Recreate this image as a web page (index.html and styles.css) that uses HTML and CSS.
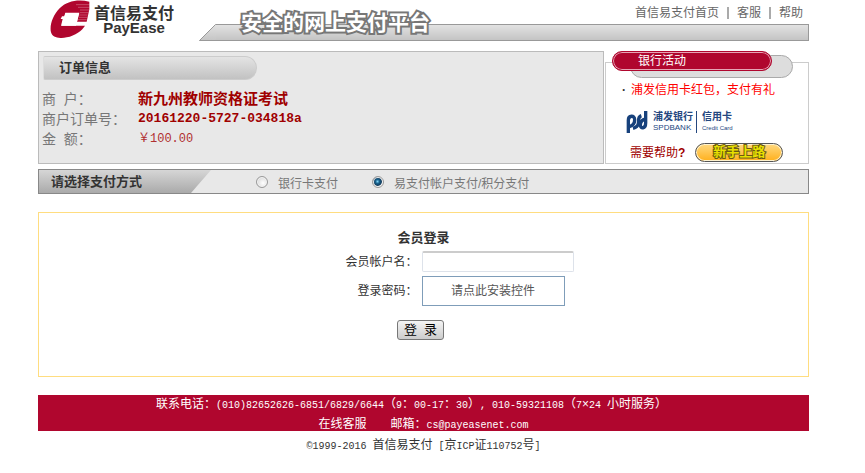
FILE: index.html
```html
<!DOCTYPE html>
<html lang="zh-CN">
<head>
<meta charset="utf-8">
<title>首信易支付 PayEase</title>
<link rel="stylesheet" href="styles.css">
</head>
<body>
<div class="page">
  <header class="header">
    <div class="logo">
      <svg class="logo-mark" viewBox="0 0 120 114" width="40" height="38" aria-hidden="true">
        <path fill="#b0062e" d="M118 5C84 -3 51 3 29 25C8 46 -2 77 3 97C7 113 28 117 50 112C76 107 96 92 105 77H35L46 40H87L81 65H110L118 28Z"/>
        <path fill="#fff" d="M46 38H88L78 77H33L38 57H32L36 49H43Z"/>
        <path stroke="#fff" stroke-width="1.500" opacity=".55" d="M78 14H119M84 22H118M90 30H117M90 38H115M88 45H113M86 52H112M84 59H110"/>
      </svg>
      <div class="logo-text"><span class="logo-cn">首信易支付</span><span class="logo-en">PayEase</span></div>
    </div>
    <div class="banner">
      <nav class="links"><a href="#">首信易支付首页</a><i></i><a href="#">客服</a><i></i><a href="#">帮助</a></nav>
      <div class="bar">
        <svg class="slope" viewBox="0 0 17 17" width="17" height="17" aria-hidden="true">
          <defs><linearGradient id="g" x2="0" y2="1"><stop stop-color="#e2e2e2"/><stop offset="1" stop-color="#c4c4c4"/></linearGradient></defs>
          <path fill="url(#g)" d="M0 17L17 0V17Z"/><path fill="none" stroke="#999" d="M17 .5H16.500L.5 16.500H17"/>
        </svg>
        <div class="bar-body"></div>
        <h1 class="slogan">安全的网上支付平台</h1>
      </div>
    </div>
  </header>

  <div class="top">
    <section class="order">
      <h2 class="order-title">订单信息</h2>
      <dl class="order-list">
        <dt>商&nbsp; 户：</dt><dd class="shop">新九州教师资格证考试</dd>
        <dt>商户订单号：</dt><dd class="number">20161220-5727-034818a</dd>
        <dt>金&nbsp; 额：</dt><dd class="amount">￥100.00</dd>
      </dl>
    </section>
    <aside class="promo">
      <div class="promo-head"><h2 class="promo-title">银行活动</h2></div>
      <div class="promo-body">
        <a class="news" href="#"><b>·</b>浦发信用卡红包，支付有礼</a>
        <div class="bank">
          <svg viewBox="0 0 64 66" width="22" height="22" aria-hidden="true">
            <g fill="none" stroke="#17417c" stroke-width="10"><path d="M6 66V28C6 12 25 12 25 26C25 38 19 44 9 47"/><path d="M45 14C33 18 38 28 36 38C34 48 28 50 20 52"/><path d="M58 0V36C58 54 42 54 42 42C42 32 48 26 58 24"/></g>
          </svg>
          <div class="bank-name"><span>浦发银行</span><small class="spdb">SPDBANK</small></div>
          <div class="bank-card"><span>信用卡</span><small>Credit Card</small></div>
        </div>
        <div class="help"><span>需要帮助<b>?</b></span><a class="guide" href="#">新手上路</a></div>
      </div>
    </aside>
  </div>

  <div class="methods" role="radiogroup" aria-labelledby="methods-title">
    <div class="methods-title" id="methods-title">请选择支付方式</div>
    <label class="method"><input type="radio" name="pay">银行卡支付</label>
    <label class="method"><input type="radio" name="pay" checked>易支付帐户支付/积分支付</label>
  </div>

  <form class="login">
    <h2>会员登录</h2>
    <div class="row"><label for="account">会员帐户名：</label><input id="account" type="text"></div>
    <div class="row"><span class="caption">登录密码：</span><button class="install" type="button">请点此安装控件</button></div>
    <button class="submit" type="submit">登&nbsp; 录</button>
  </form>

  <footer>
    <div class="contact">
      <p>联系电话：<span>(010)82652626-6851/6829/6644</span>（<span>9</span>：<span>00-17</span>：<span>30</span>）<span>, 010-59321108</span>（<span>7</span>×<span>24 </span>小时服务）</p>
      <p><a href="#">在线客服</a><a class="mail" href="#">邮箱：<span>cs@payeasenet.com</span></a></p>
    </div>
    <p class="copy"><span>©1999-2016 </span>首信易支付<span> [</span>京<span>ICP</span>证<span>110752</span>号<span>]</span></p>
  </footer>
</div>
</body>
</html>
```
FILE: styles.css
```css
* { box-sizing: border-box; }
body {
  margin: 0;
  background: #fff;
  color: #333;
  font: 12px/18px "Liberation Sans", "Noto Sans CJK SC", sans-serif;
}
h1, h2, p, dl, dd { margin: 0; }
h2 { font-size: 12px; }
a { color: inherit; text-decoration: none; }
button, input { font: inherit; }
.page { margin: 0 56px 0 38px; }

.header { display: flex; height: 41px; }
.logo { display: flex; width: 161px; padding-left: 12px; }
.logo-mark { flex: none; }
.logo-text { display: flex; flex-direction: column; width: 88px; text-align: center; padding-top: 4px; }
.logo-cn { font: bold 16px/16px "Noto Sans CJK SC", sans-serif; white-space: nowrap; }
.logo-en { font: bold 15px/16px "Liberation Sans", sans-serif; }
.banner { flex: 1; display: flex; flex-direction: column; justify-content: space-between; }
.links { display: flex; justify-content: flex-end; align-items: center; gap: 8px; padding: 4px 6px 0 0; color: #666; }
.links i { width: 2px; height: 12px; background: #aaa; }
.bar { position: relative; display: flex; height: 17px; }
.slope { flex: none; }
.bar-body { flex: 1; border: 1px solid #999; border-left: 0; background: linear-gradient(#e2e2e2, #c4c4c4); }
.slogan {
  position: absolute; left: 42px; bottom: 5px;
  font: bold 21px/30px "Noto Sans CJK SC", sans-serif;
  color: #fff; -webkit-text-stroke: 4px #777; paint-order: stroke fill;
}

.top { display: flex; gap: 1px; margin-top: 10px; height: 113px; }
.order { flex: 1; border: 1px solid #bbb; background: #e8e8e8; padding: 4px; }
.order-title {
  width: 214px; padding-left: 15px; line-height: 22px; font-size: 13px;
  border: 1px solid #ccc; border-left-color: #ddd; border-radius: 2px 12px 12px 2px;
  background: linear-gradient(#e4e4e4, #c2c2c2);
}
.order-list { display: grid; grid-template-columns: 96px 1fr; grid-auto-rows: 20px; padding-top: 9px; font-size: 14px; line-height: 20px; color: #777; margin-left: -1px; }
.order-list dt { white-space: nowrap; }
.order-list dd { color: #a00000; }
.shop { font-size: 15px; font-weight: bold; }
.number { font: bold 13px/20px "Liberation Mono", monospace; }
.order-list .amount { font: 12px/20px "Liberation Mono", "Noto Sans CJK SC", monospace; color: #b03030; }

.promo { position: relative; width: 204px; margin-top: 11px; border: 1px solid #ccc; }
.promo-head {
  position: absolute; top: -8px; left: 24px; width: 163px; height: 23px;
  border: 1px solid #aaa; border-radius: 12px; background: #ddd;
}
.promo-title {
  position: absolute; top: -5px; left: -19px; width: 160px; height: 20px; padding-left: 25px;
  border: 1px solid #b0062e; border-radius: 10px; background: #b0062e;
  box-shadow: inset 0 0 0 1px #e6a5b5; color: #fff; font-weight: normal; line-height: 18px;
}
.promo-body { padding: 18px 10px 0 16px; }
.news { display: block; color: #f00; white-space: nowrap; }
.news b { color: #333; display: inline-block; width: 9px; }
.bank { display: flex; padding: 12px 0 0 4px; height: 38px; color: #24477f; font-weight: bold; line-height: 12px; }
.bank-name, .bank-card { display: flex; flex-direction: column; height: 22px; }
.bank-name { padding: 0 3px 0 5px; border-right: 1px solid #24477f; font-size: 10px; }
.bank-card { padding-left: 5px; font-size: 10px; }
.bank small { font: 9px/10px "Liberation Sans", sans-serif; }
.bank .bank-card small { font-size: 6px; }
.bank-name .spdb { font-size: 8px; }
.help { display: flex; align-items: center; gap: 10px; padding-left: 8px; color: #a00000; white-space: nowrap; margin-top: 6px; }
.guide {
  width: 88px; height: 19px; text-align: center; line-height: 16px; font-size: 13px; font-weight: bold; color: #e8e000;
  border: 1px solid #555; border-radius: 10px; background: linear-gradient(#ffd980, #ffb01c);
  box-shadow: inset 0 0 0 1px #fff3cf; -webkit-text-stroke: 2px #6b5a10; paint-order: stroke fill;
}

.methods { display: flex; align-items: center; margin-top: 5px; height: 25px; border: 1px solid #888; background: #e8e8e8; color: #777; }
.methods-title {
  width: 172px; height: 23px; padding-left: 12px; line-height: 23px; font-weight: bold; font-size: 13px; color: #333;
  background: linear-gradient(#d6d6d6, #aaa); clip-path: polygon(0 0, 100% 0, 152px 100%, 0 100%);
}
.method { display: flex; align-items: center; margin-left: 45px; padding-top: 4px; }
.method + .method { margin-left: 34px; }
.method input {
  appearance: none; width: 12px; height: 12px; margin: -4px 10px 0 0; border: 1px solid #999; border-radius: 50%;
  background: radial-gradient(circle at 60% 60%, #fff, #ccc); box-shadow: inset 0 0 0 1px #f4f4f4;
}
.method input:checked { background: radial-gradient(circle at 45% 45%, #7fd4f5 0, #17608c 2px, #123c5c 4px, #eee 5px); }

.login { display: flex; flex-direction: column; align-items: center; margin-top: 18px; height: 165px; padding-top: 16px; border: 1px solid #ffdd80; }
.login h2 { font-size: 13px; }
.row { display: flex; gap: 4px; width: 264px; align-items: center; margin-left: 84px; }
.row label, .caption { width: 84px; text-align: right; white-space: nowrap; }
.row input { width: 152px; height: 21px; border: 1px solid #dde2ea; border-top: 2px solid #ccc; border-radius: 2px; margin: 4px 0; }
.install { width: 143px; height: 30px; padding: 0; border: 1px solid #7f9db9; background: #fff; color: #555; }
.submit { width: 47px; height: 20px; margin: 14px 6px 0 0; padding: 0; border: 1px solid #777; border-radius: 3px; background: linear-gradient(#f4f4f4, #ccc); color: #000; font-size: 13px; line-height: 16px; }

footer { margin-top: 18px; text-align: center; white-space: nowrap; text-spacing-trim: space-all; }
footer span { font: 10px/18px "Liberation Mono", monospace; white-space: pre; }
.contact { height: 36px; background: #b0062e; color: #fff; }
.contact p { line-height: 18px; }
.contact p:first-child { padding-right: 24px; }
.mail { margin-left: 24px; }
.copy { margin-top: 5px; }
```
